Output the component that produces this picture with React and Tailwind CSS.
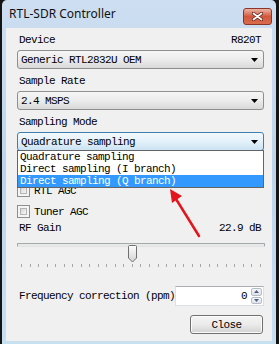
import React from 'react';

const MONO = "[font-family:'Liberation_Mono',monospace] text-[11px] leading-[12px] tracking-[-0.6px] text-black whitespace-nowrap";

const GAINS = [0.0, 0.9, 1.4, 2.7, 3.7, 7.7, 8.7, 12.5, 14.4, 15.7, 16.6, 19.7, 20.7, 22.9, 25.4, 28.0, 29.7, 32.8, 33.8, 36.4, 37.2, 38.6, 40.2, 42.1, 43.4, 43.9, 44.5, 48.0, 49.6];
const GAIN_INDEX = 13;

const MODES = ['Quadrature sampling', 'Direct sampling (I branch)', 'Direct sampling (Q branch)'];

function Caret() {
  return (
    <svg width="7" height="4" viewBox="0 0 7 4">
      <path d="M0 0h7L3.5 4z" fill="#000" />
    </svg>
  );
}

function Combo({ value, focused, children }) {
  return (
    <div
      className={`relative h-[19px] flex items-center justify-between pl-[3px] pr-[5px] rounded-[3px] border ${
        focused
          ? 'border-[#3c7fb1] bg-linear-to-b from-[#f3f9fd] via-[#e4f1fa] to-[#cbe3f3]'
          : 'border-[#8e8f8f] bg-linear-to-b from-[#f6f6f6] via-[#ececec] to-[#d9d9d9]'
      }`}
    >
      <span className={MONO}>{value}</span>
      <Caret />
      {children}
    </div>
  );
}

function Label({ left, right }) {
  return (
    <div className="h-[12px] flex items-center justify-between pl-[2px] pr-[3px]">
      <span className={MONO}>{left}</span>
      {right && <span className={MONO}>{right}</span>}
    </div>
  );
}

function Checkbox({ label }) {
  return (
    <div className="h-[13px] flex items-center gap-[4px]">
      <div className="w-[13px] h-[13px] border border-[#8e8f8f] bg-[#f4f4f4] p-[2px]">
        <div className="w-full h-full border border-[#b4b4b4] bg-linear-to-br from-[#d6d6d6] to-[#f7f7f7]" />
      </div>
      <span className={MONO}>{label}</span>
    </div>
  );
}

function SpinArrow({ up }) {
  return (
    <svg width="5" height="3" viewBox="0 0 5 3">
      <path d={up ? 'M0 3h5L2.5 0z' : 'M0 0h5L2.5 3z'} fill="#4d6185" />
    </svg>
  );
}

export default function App() {
  const thumbLeft = 4 + (GAIN_INDEX / (GAINS.length - 1)) * 240 - 5.5;

  return (
    <div className="relative w-[279px] h-[344px] bg-[#141414] pl-[2px] pr-[3px] overflow-hidden">
      <div className="h-full flex flex-col bg-linear-to-b from-[#cddef1] via-[#bed3eb] to-[#c6e0f0] pl-[4px] pr-[4px] pb-[3px] rounded-t-[5px]">
        {/* title bar */}
        <div className="h-[28px] flex justify-between -ml-[4px] -mr-[4px] pl-[7px] pr-[4px]">
          <span className="[font-family:'Noto_Sans',sans-serif] text-[12px] leading-[28px] text-[#111]">RTL-SDR Controller</span>
          <div className="mt-[8px] w-[29px] h-[17px] rounded-[3px] border border-[#8a3527] bg-linear-to-b from-[#ebb3a5] via-[#d2563c] to-[#d96c4d] flex items-center justify-center">
            <svg width="11" height="9" viewBox="0 0 11 9">
              <path d="M1.5 1.5l8 6M9.5 1.5l-8 6" stroke="#5b1d12" strokeWidth="3.4" strokeLinecap="round" />
              <path d="M1.5 1.5l8 6M9.5 1.5l-8 6" stroke="#fff" strokeWidth="1.8" strokeLinecap="round" />
            </svg>
          </div>
        </div>

        {/* client area */}
        <div className="flex-1 flex flex-col bg-[#f0f0f0] pl-[11px] pr-[8px] pt-[6px]">
          <Label left="Device" right="R820T" />
          <div className="mt-[4px]">
            <Combo value="Generic RTL2832U OEM" />
          </div>

          <div className="mt-[6px]">
            <Label left="Sample Rate" />
          </div>
          <div className="mt-[4px]">
            <Combo value="2.4 MSPS" />
          </div>

          <div className="mt-[6px]">
            <Label left="Sampling Mode" />
          </div>
          <div className="mt-[4px] relative z-10">
            <Combo value="Quadrature sampling" focused>
              <div className="absolute top-full -left-px -right-px bg-white border border-[#646464]">
                {MODES.map((m, i) => (
                  <div
                    key={m}
                    className={`h-[12px] pl-[2px] flex items-center ${i === 2 ? 'bg-[#3399ff]' : ''}`}
                  >
                    <span className={`${MONO} ${i === 2 ? 'text-white' : ''}`}>{m}</span>
                  </div>
                ))}
              </div>
            </Combo>
          </div>

          <div className="mt-[33px]">
            <Checkbox label="RTL AGC" />
          </div>
          <div className="mt-[8px]">
            <Checkbox label="Tuner AGC" />
          </div>

          <div className="mt-[4px]">
            <Label left="RF Gain" right={`${GAINS[GAIN_INDEX]} dB`} />
          </div>

          {/* slider */}
          <div className="mt-[2px]">
            <div className="relative h-[20px] -mr-[1px]">
              <div className="mt-[7px] h-[4px] border border-[#a8a8a8] border-b-[#e2e2e2] bg-[#e7eaea] rounded-[1px]" />
              <svg className="absolute top-[1px]" style={{ left: thumbLeft }} width="11" height="19" viewBox="0 0 11 19">
                <defs>
                  <linearGradient id="thumb" x1="0" y1="0" x2="0" y2="1">
                    <stop offset="0" stopColor="#fdfdfd" />
                    <stop offset="1" stopColor="#d4d4d4" />
                  </linearGradient>
                </defs>
                <path d="M1.5 2.5a1 1 0 0 1 1-1h6a1 1 0 0 1 1 1v11.5l-4 4l-4-4z" fill="url(#thumb)" stroke="#707070" />
              </svg>
            </div>
            <div className="mt-[1px] h-[3px] flex justify-between pl-[4px] pr-[3px]">
              {GAINS.map((g) => (
                <div key={g} className="w-px h-full bg-[#a4a4a4]" />
              ))}
            </div>
          </div>

          {/* frequency correction */}
          <div className="mt-[19px] h-[20px] flex items-center justify-between pl-[2px]">
            <span className={MONO}>Frequency correction (ppm)</span>
            <div className="w-[90px] h-[20px] flex bg-white border border-[#dbdfe6] border-t-[#abadb3]">
              <div className="flex-1 flex items-center justify-end pr-[3px]">
                <span className={MONO}>0</span>
              </div>
              <div className="w-[13px] flex flex-col gap-px p-px">
                <div className="flex-1 flex items-center justify-center rounded-[2px] border border-[#b5bcc7] bg-linear-to-b from-[#f6f6f6] to-[#dfe3e8]">
                  <SpinArrow up />
                </div>
                <div className="flex-1 flex items-center justify-center rounded-[2px] border border-[#b5bcc7] bg-linear-to-b from-[#f6f6f6] to-[#dfe3e8]">
                  <SpinArrow />
                </div>
              </div>
            </div>
          </div>

          <div className="mt-[9px] flex justify-end pr-[1px]">
            <button className="w-[73px] h-[19px] rounded-[3px] border border-[#707070] bg-linear-to-b from-[#f4f4f4] via-[#ebebeb] to-[#d2d2d2] shadow-[inset_0_0_0_1px_#fbfbfb] flex items-center justify-center">
              <span className={MONO}>Close</span>
            </button>
          </div>
        </div>
      </div>

      {/* annotation arrow */}
      <svg className="absolute inset-0 pointer-events-none z-20" width="279" height="344" viewBox="0 0 279 344">
        <path d="M199 236L176 199" stroke="#e3141c" strokeWidth="2.5" strokeLinecap="round" />
        <path d="M170 189L182 196L172 203z" fill="#e3141c" />
      </svg>
    </div>
  );
}
